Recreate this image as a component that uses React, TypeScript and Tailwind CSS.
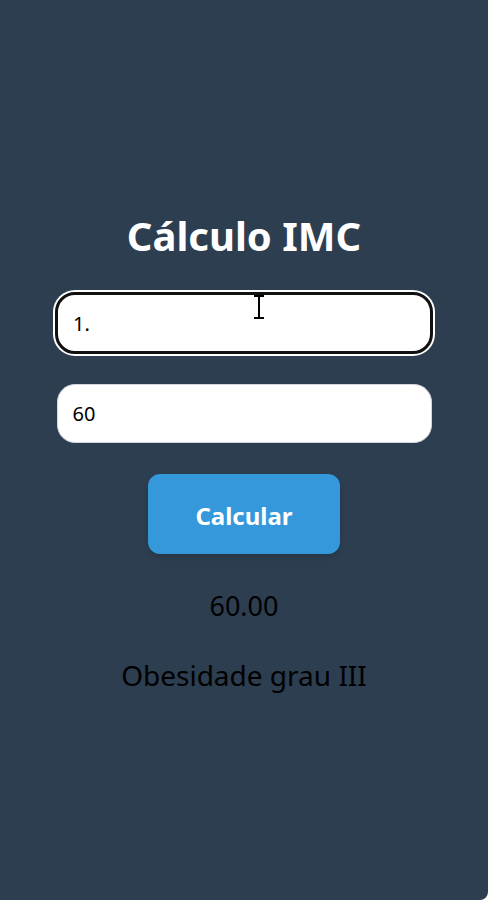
import { useState } from 'react'

export default function App() {
  const [altura, setAltura] = useState('1.')
  const [peso, setPeso] = useState('60')

  return (
    <div
      className="min-h-screen bg-[#2c3e50] rounded-br-lg flex flex-col items-center pt-[216px]"
      style={{ fontFamily: '"Noto Sans", sans-serif' }}
    >
      <h1 className="text-[40px] font-bold text-white leading-none mb-[36px]">Cálculo IMC</h1>

      <div className="relative">
        <input
          value={altura}
          onChange={(e) => setAltura(e.target.value)}
          className="w-[378px] h-[62px] rounded-[20px] bg-white border-[3px] border-[#111] shadow-[0_0_0_2px_white] px-[15px] text-[20px] text-black outline-none"
        />
        {/* mouse I-beam */}
        <svg className="absolute left-[198px] top-[3px]" width="12" height="24" viewBox="0 0 12 24">
          <path d="M1 1h10M6 1v22M1 23h10" stroke="#000" strokeWidth="2" fill="none" />
        </svg>
      </div>

      <input
        value={peso}
        onChange={(e) => setPeso(e.target.value)}
        className="mt-[30px] w-[375px] h-[59px] rounded-[18px] bg-white border border-gray-300 px-[15px] text-[20px] text-black outline-none"
      />

      <button className="mt-[31px] w-[192px] h-[80px] rounded-xl bg-[#3498db] text-white text-[24px] font-bold shadow-md pt-[3px]">
        Calcular
      </button>

      <p className="mt-[38px] text-[27px] leading-none">60.00</p>
      <p className="mt-[42px] text-[28px] leading-none">Obesidade grau III</p>
    </div>
  )
}
